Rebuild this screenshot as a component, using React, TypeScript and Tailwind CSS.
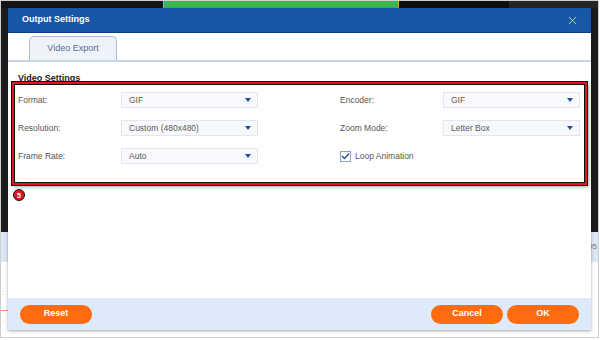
import { X } from "lucide-react";

function Dropdown({ value }: { value: string }) {
    return (
        <div className="flex items-center justify-between w-[137px] h-[16px] pl-[7px] pr-[6px] bg-[#f7f9fd] border border-[#e1e7f2] text-[#5a5a5a] text-[8.5px]">
            <span>{value}</span>
            <svg width="6" height="4" viewBox="0 0 6 4"><path d="M0 0 H6 L3 4 Z" fill="#1d4f9e" /></svg>
        </div>
    );
}

function Row({ label, children }: { label: string; children: React.ReactNode }) {
    return (
        <div className="flex items-center h-[16px]">
            <span className="w-[103px] text-[#555] text-[8.5px]">{label}</span>
            {children}
        </div>
    );
}

export default function App() {
    return (
        <div className="w-[600px] h-[340px] bg-white relative overflow-hidden" style={{ fontFamily: '"Liberation Sans", Arial, sans-serif' }}>
            {/* app behind the dialog */}
            <div className="w-[599px] h-[338px] border border-[#cfcfcf] flex flex-col">
                <div className="h-[231px] bg-[#1c1c1c] flex flex-col">
                    <div className="h-[7px] flex">
                        <div className="w-[162px] bg-[#151515]" />
                        <div className="w-[236px] bg-[#3fb54f] border-x border-[#c9b531]" />
                        <div className="w-[110px] bg-[#0f0f0f]" />
                        <div className="flex-1 bg-[#262626]" />
                    </div>
                </div>
                <div className="h-[30px] bg-[#dbe6f7] flex items-center justify-end pr-[1px] text-[8px] text-[#777]">
                    <span>05</span>
                </div>
                <div className="flex-1 bg-white relative">
                    <div className="absolute left-[1px] top-[27px] text-[7px] text-[#b9a96a] leading-none">:</div>
                    <div className="absolute left-0 top-[48px] w-[7px] border-t border-[#f39a6b]" />
                    <div className="absolute left-[2px] top-[56px] text-[6px] text-[#f39a6b] leading-none">:</div>
                </div>
            </div>

            {/* dialog */}
            <div className="absolute left-[8px] top-[8px] w-[583px] h-[322px] bg-white flex flex-col shadow-[0_1px_3px_rgba(0,0,0,0.35)]">
                <div className="h-[25px] bg-[#1757a8] border-b border-[#0c3d85] flex items-center justify-between pl-[14px] pr-[12px]">
                    <span className="text-white text-[9px] font-semibold">Output Settings</span>
                    <X size={13} strokeWidth={1.4} className="text-[#dfe8f5]" />
                </div>
                <div className="h-[29px] flex items-end pl-[21px] border-b-2 border-[#cbd5e8]">
                    <div className="w-[88px] h-[24px] rounded-t-[5px] border border-b-0 border-[#a9bde0] bg-[#eef2fa] flex items-center justify-center text-[9px] text-[#5b6d92]">
                        Video Export
                    </div>
                </div>

                <div className="relative flex-1 px-[10px] pt-[12px]">
                    <div className="text-[9px] font-bold text-[#222] leading-none">Video Settings</div>
                    <div className="mt-[9px] grid grid-cols-[322px_1fr] gap-y-[12px]">
                        <Row label="Format:"><Dropdown value="GIF" /></Row>
                        <Row label="Encoder:"><Dropdown value="GIF" /></Row>
                        <Row label="Resolution:"><Dropdown value="Custom (480x480)" /></Row>
                        <Row label="Zoom Mode:"><Dropdown value="Letter Box" /></Row>
                        <Row label="Frame Rate:"><Dropdown value="Auto" /></Row>
                        <div className="flex items-center h-[16px] gap-[4px]">
                            <div className="w-[11px] h-[11px] border border-[#8da3c9] bg-white flex items-center justify-center">
                                <svg width="9" height="8" viewBox="0 0 9 8"><path d="M1 4 L3.5 6.5 L8 1.5" fill="none" stroke="#1d4f9e" strokeWidth="1.4" /></svg>
                            </div>
                            <span className="text-[#555] text-[8.5px]">Loop Animation</span>
                        </div>
                    </div>

                    {/* annotation */}
                    <div className="absolute left-[4px] top-[20px] w-[575px] h-[103px] border-2 border-[#e8141b] shadow-[0_0_0_1px_#111,inset_0_0_0_1px_#111,2px_2px_3px_rgba(0,0,0,0.35)]" />
                    <div className="absolute left-[5px] top-[127px] w-[12px] h-[12px] rounded-full bg-[#e3141b] border border-[#111] flex items-center justify-center text-white text-[7px] font-bold leading-none">5</div>
                </div>

                <div className="h-[32px] bg-[#deeafa] flex items-center justify-between px-[12px]">
                    <button className="w-[72px] h-[19px] rounded-full bg-[#ff6b0f] text-white text-[9px] font-semibold">Reset</button>
                    <div className="flex gap-[4px]">
                        <button className="w-[72px] h-[19px] rounded-full bg-[#ff6b0f] text-white text-[9px] font-semibold">Cancel</button>
                        <button className="w-[72px] h-[19px] rounded-full bg-[#ff6b0f] text-white text-[9px] font-semibold">OK</button>
                    </div>
                </div>
            </div>
        </div>
    );
}
